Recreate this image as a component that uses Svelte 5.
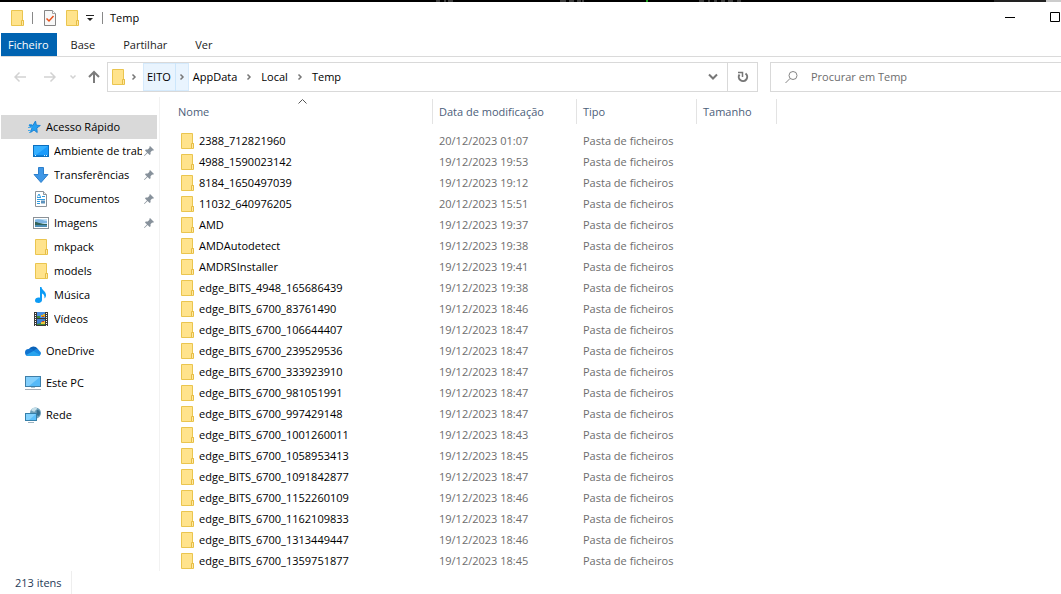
<script lang="ts">
	interface Entry {
		name: string;
		date: string;
	}

	interface Place {
		name: string;
		icon: string;
		pinned?: boolean;
	}

	const tabs = ['Base', 'Partilhar', 'Ver'];

	const crumbs = ['EITO', 'AppData', 'Local', 'Temp'];

	const places: Place[] = [
		{ name: 'Ambiente de trabalho', icon: 'desktop', pinned: true },
		{ name: 'Transferências', icon: 'download', pinned: true },
		{ name: 'Documentos', icon: 'document', pinned: true },
		{ name: 'Imagens', icon: 'image', pinned: true },
		{ name: 'mkpack', icon: 'folder' },
		{ name: 'models', icon: 'folder' },
		{ name: 'Música', icon: 'music' },
		{ name: 'Vídeos', icon: 'video' }
	];

	const roots: Place[] = [
		{ name: 'OneDrive', icon: 'cloud' },
		{ name: 'Este PC', icon: 'pc' },
		{ name: 'Rede', icon: 'network' }
	];

	const entries: Entry[] = [
		{ name: '2388_712821960', date: '20/12/2023 01:07' },
		{ name: '4988_1590023142', date: '19/12/2023 19:53' },
		{ name: '8184_1650497039', date: '19/12/2023 19:12' },
		{ name: '11032_640976205', date: '20/12/2023 15:51' },
		{ name: 'AMD', date: '19/12/2023 19:37' },
		{ name: 'AMDAutodetect', date: '19/12/2023 19:38' },
		{ name: 'AMDRSInstaller', date: '19/12/2023 19:41' },
		{ name: 'edge_BITS_4948_165686439', date: '19/12/2023 19:38' },
		{ name: 'edge_BITS_6700_83761490', date: '19/12/2023 18:46' },
		{ name: 'edge_BITS_6700_106644407', date: '19/12/2023 18:47' },
		{ name: 'edge_BITS_6700_239529536', date: '19/12/2023 18:47' },
		{ name: 'edge_BITS_6700_333923910', date: '19/12/2023 18:47' },
		{ name: 'edge_BITS_6700_981051991', date: '19/12/2023 18:47' },
		{ name: 'edge_BITS_6700_997429148', date: '19/12/2023 18:47' },
		{ name: 'edge_BITS_6700_1001260011', date: '19/12/2023 18:43' },
		{ name: 'edge_BITS_6700_1058953413', date: '19/12/2023 18:45' },
		{ name: 'edge_BITS_6700_1091842877', date: '19/12/2023 18:47' },
		{ name: 'edge_BITS_6700_1152260109', date: '19/12/2023 18:46' },
		{ name: 'edge_BITS_6700_1162109833', date: '19/12/2023 18:47' },
		{ name: 'edge_BITS_6700_1313449447', date: '19/12/2023 18:46' },
		{ name: 'edge_BITS_6700_1359751877', date: '19/12/2023 18:45' }
	];

	const total = 213;
	let query = $state('');
</script>

{#snippet icon(kind: string)}
	<svg class="icon" width="16" height="16" viewBox="0 0 16 16" aria-hidden="true">
		{#if kind === 'folder'}
			<path d="M2.5 .5h11v10h1v5h-12z" fill="#ffe38c" stroke="#eac54f" />
			<path d="M12.5 15V10.5h2V15" fill="#ffe9a2" stroke="#e6bd45" />
		{:else if kind === 'star'}
			<path
				d="M10.500 2l.8 4.200 4 .3-3.500 2.500.4 4.500-3.200-2.500-3.500 2.500 1.300-4.300-2.600-2.700 3.800-.2z"
				fill="#259ff0"
				stroke="#1b84d6"
			/>
			<path d="M4 5.500h3M3 8.500h4M3 11.500h3M4 13.500h2" stroke="#4aa9e8" />
		{:else if kind === 'desktop'}
			<rect x=".5" y="2.500" width="15" height="11" fill="#1b9bfb" stroke="#0b6fbf" />
			<path d="M1 3h14L3 12H1z" fill="#36b0ff" />
			<path d="M1 12.500h14" stroke="#0b7fd8" />
			<path d="M2 12.500h1M11 12.500h1M13 12.500h1" stroke="#d8f0ff" />
		{:else if kind === 'download'}
			<path d="M5.500 .5h5v7h4.500L8 15.500 1 7.500h4.500z" fill="#3f97e6" stroke="#2c7fcc" />
		{:else if kind === 'document'}
			<path d="M2.500 .5h8l3 3v12h-11z" fill="#fff" stroke="#8c9399" />
			<path d="M10.500 .5v3h3" fill="#e7eaec" stroke="#8c9399" />
			<path d="M4 6.500h4M4.500 5.500L6 3l1.500 3M9 5.500h3M4 8.500h8M4 10.500h3M4 12.500h3" fill="none" stroke="#2f9be0" />
			<path d="M8 9.500h4v3H8z" fill="#5d93bd" />
		{:else if kind === 'image'}
			<rect x=".5" y="2.500" width="15" height="11" fill="#fff" stroke="#8b9197" />
			<rect x="2" y="4" width="12" height="8" fill="#bfe0f5" />
			<path d="M2 5c4-2 8 1 12 1v2H2z" fill="#7eb4e2" />
			<path d="M2 7c3 0 5 2 12 2v1H2z" fill="#32635a" />
			<path d="M2 10h12v2H2z" fill="#4d8db4" />
		{:else if kind === 'music'}
			<path
				d="M7 0h1.500c0 3 4.500 4 4.500 8 0 1.500-.5 2.500-1.500 3.500.3-3-1-4.500-2.500-5V13c0 1.600-1.500 3-3.500 3S2 15.300 2 13.500 3.600 10.500 5.500 10.500c.6 0 1.100.1 1.500.3z"
				fill="#0c9bf5"
			/>
		{:else if kind === 'video'}
			<path d="M1 1h14v14H1z" fill="#3a3a3a" />
			<path d="M4 1h8v6H4z" fill="#4a8fe0" />
			<path d="M4 8h8v6H4z" fill="#3d7fd2" />
			<path d="M8 4h2v-1h2v3H8z" fill="#e0b12b" />
			<path d="M4 5h3v2H4zM8 12h4v2H4v-1z" fill="#3f8c3a" />
			<path d="M8 11h1v-1h3v3H8z" fill="#edc83a" />
			<path d="M9 5h2v1H9zM9 10h2v1H9z" fill="#c7402c" />
			<path d="M2.500 2v13M13.500 2v13" stroke="#fff" stroke-dasharray="1 1" />
		{:else if kind === 'cloud'}
			<path d="M4 6a5 4.500 0 0 1 8.500-.5L14 9 6 11z" fill="#0a62b8" />
			<path d="M3.500 6c2-.6 3.500 0 5 1l3 4-8 2A3.500 3.500 0 0 1 3.500 6z" fill="#1173cf" />
			<path d="M8.500 8c2-2.700 5-2.700 6 0 2 .8 2 4.200-.5 5H7z" fill="#1a8ae2" />
			<path d="M1 12l7.500-4L15 12c-.5.700-1 1-2 1H3.500c-1 0-2-.3-2.500-1z" fill="#29a4ee" />
		{:else if kind === 'pc'}
			<rect x=".5" y="1.500" width="15" height="10" fill="#55b9f8" stroke="#3f7fa8" />
			<path d="M1 2h14L4 11H1z" fill="#83cffc" />
			<path d="M6 12h4v1H6z" fill="#a9c3d3" />
			<path d="M0 14.500h16" stroke="#a4adb7" />
		{:else if kind === 'network'}
			<circle cx="10.500" cy="6" r="5.500" fill="#6d9fb9" />
			<path d="M6 3c2-3 5-2.500 6-2 0 2-2 2-2 3s-2 1-4-1z" fill="#c6e0ea" />
			<path d="M12 3c2 0 3 1 3 3s-1 3-2 3-2-4-1-6z" fill="#38708f" />
			<rect x=".5" y="6.500" width="11" height="7" fill="#5cc0fb" stroke="#357fa9" />
			<path d="M1 7h10l-7 6H1z" fill="#83d2fe" />
			<path d="M3 15.500h6" stroke="#9db4c2" />
		{/if}
	</svg>
{/snippet}

{#snippet chevron()}
	<svg width="6" height="8" viewBox="0 0 6 8" aria-hidden="true">
		<path d="M1.500 1.500L4 4 1.500 6.500" fill="none" stroke="#777" stroke-width="1.500" />
	</svg>
{/snippet}

<div class="window">
	<div class="backdrop">
		<svg width="340" height="2" aria-hidden="true">
			<path d="M3 1h4M12 0v2M15 1h5M127 1h6M136 1h5M144 1h4M150 0v2M266 1h5M276 0v2M281 1h3M288 1h4M295 1h5M304 1h4" stroke="#777" />
			<path d="M214 0v2" stroke="#1fa01f" stroke-width="2" />
		</svg>
		<span class="backdrop-tab"></span>
		<span class="backdrop-end"></span>
	</div>

	<header class="titlebar">
		{@render icon('folder')}
		<span class="bar first"></span>
		<button class="quick" aria-label="Propriedades">
			<svg width="14" height="16" viewBox="0 0 14 16">
				<path d="M1.500 .5h8l3 3v12h-11z" fill="#f8f8f8" stroke="#858585" />
				<path d="M9.500 .5v3h3" fill="#fff" stroke="#a0a0a0" />
				<path d="M3.500 8.500l2.500 2.500 4.500-5" fill="none" stroke="#e8521c" stroke-width="1.500" />
			</svg>
		</button>
		<button class="quick new-folder" aria-label="Nova pasta">{@render icon('folder')}</button>
		<button class="quick" aria-label="Personalizar barra">
			<svg width="8" height="8" viewBox="0 0 8 8">
				<path d="M0 1.500h8" stroke="#222" />
				<path d="M1 4h6L4 7z" fill="#222" />
			</svg>
		</button>
		<span class="bar last"></span>
		<span class="title">Temp</span>
		<button class="caption minimize" aria-label="Minimizar">
			<svg width="11" height="11"><path d="M0 5.500h10" stroke="#000" /></svg>
		</button>
		<button class="caption maximize" aria-label="Maximizar">
			<svg width="11" height="11"><path d="M.5 .5h9v9h-9z" fill="none" stroke="#000" /></svg>
		</button>
	</header>

	<nav class="ribbon">
		<button class="tab file">Ficheiro</button>
		{#each tabs as tab (tab)}
			<button class="tab">{tab}</button>
		{/each}
	</nav>

	<div class="navbar">
		<div class="history">
			<button class="back" aria-label="Retroceder" disabled>
				<svg width="12" height="12" viewBox="0 0 12 12">
					<path d="M12 6H1M5.500 1.500L1 6l4.500 4.500" fill="none" stroke="#d2d2d2" stroke-width="1.500" />
				</svg>
			</button>
			<button class="forward" aria-label="Avançar" disabled>
				<svg width="12" height="12" viewBox="0 0 12 12">
					<path d="M0 6h11M6.500 1.500L11 6l-4.500 4.500" fill="none" stroke="#d2d2d2" stroke-width="1.500" />
				</svg>
			</button>
			<button class="recent" aria-label="Localizações recentes">
				<svg width="6" height="6" viewBox="0 0 6 6">
					<path d="M.5 1.500L3 4l2.500-2.500" fill="none" stroke="#d2d2d2" stroke-width="1.500" />
				</svg>
			</button>
			<button class="up" aria-label="Subir">
				<svg width="12" height="14" viewBox="0 0 12 14">
					<path d="M6 13V2M1 7l5-5 5 5" fill="none" stroke="#7c7c7c" stroke-width="2" />
				</svg>
			</button>
		</div>

		<div class="address">
			<button class="crumb-root" aria-label="Pasta">{@render icon('folder')}</button>
			<button class="crumb-arrow" aria-label="Expandir">{@render chevron()}</button>
			{#each crumbs as crumb, i (crumb)}
				<span class="crumb" class:hot={i === 0}>
					<button class="crumb-name">{crumb}</button>
					{#if i < crumbs.length - 1}
						<button class="crumb-arrow" aria-label="Expandir {crumb}">{@render chevron()}</button>
					{/if}
				</span>
			{/each}
			<button class="history-drop" aria-label="Localizações anteriores">
				<svg width="10" height="8" viewBox="0 0 10 8">
					<path d="M1 1.500l4 4 4-4" fill="none" stroke="#777" stroke-width="2" />
				</svg>
			</button>
			<button class="refresh" aria-label="Atualizar">
				<svg width="12" height="12" viewBox="0 0 12 12">
					<path d="M8.500 2.500A4.200 4.200 0 1 1 2.500 3.500" fill="none" stroke="#777" stroke-width="2" />
					<path d="M1 1.500h4.500V6" fill="none" stroke="#777" stroke-width="1.500" />
				</svg>
			</button>
		</div>

		<label class="search">
			<svg width="13" height="13" viewBox="0 0 13 13" aria-hidden="true">
				<circle cx="8" cy="4.500" r="4" fill="none" stroke="#858585" />
				<path d="M5 7.500L.5 12" stroke="#858585" />
			</svg>
			<input type="text" placeholder="Procurar em Temp" aria-label="Procurar em Temp" bind:value={query} />
		</label>
	</div>

	<div class="body">
		<aside class="sidebar">
			<button class="place root selected">{@render icon('star')}<span>Acesso Rápido</span></button>
			{#each places as place (place.name)}
				<button class="place">
					{@render icon(place.icon)}
					<span class="label">{place.name}</span>
					{#if place.pinned}
						<svg class="pin" width="10" height="10" viewBox="0 0 10 10" aria-hidden="true">
							<path d="M6 0l4 4-1 .7-.8-.2L6.500 6.300l.1 2-1 .7-2-2L.5 10 0 9.500l3-3.100-2-2 .7-1 2 .1L5.500 1.800 5.300 1z" fill="#87919b" />
						</svg>
					{/if}
				</button>
			{/each}
			{#each roots as place (place.name)}
				<button class="place root spaced">{@render icon(place.icon)}<span>{place.name}</span></button>
			{/each}
		</aside>

		<main class="files">
			<table>
				<colgroup>
					<col class="col-name" />
					<col class="col-date" />
					<col class="col-type" />
					<col class="col-size" />
					<col />
				</colgroup>
				<thead>
					<tr>
						<th aria-sort="ascending">
							<div class="head">
								Nome
								<svg class="sort" width="9" height="5" viewBox="0 0 9 5" aria-hidden="true">
									<path d="M.5 4.500l4-4 4 4" fill="none" stroke="#555" />
								</svg>
							</div>
						</th>
						<th><div class="head">Data de modificação</div></th>
						<th><div class="head">Tipo</div></th>
						<th><div class="head">Tamanho</div></th>
						<th></th>
					</tr>
				</thead>
				<tbody>
					{#each entries as entry (entry.name)}
						<tr>
							<td><div class="name">{@render icon('folder')}{entry.name}</div></td>
							<td class="dim">{entry.date}</td>
							<td class="dim">Pasta de ficheiros</td>
							<td></td>
							<td></td>
						</tr>
					{/each}
				</tbody>
			</table>
		</main>
	</div>

	<footer class="status"><span>{total} itens</span></footer>
</div>

<style>
	:global(body) {
		margin: 0;
		background: #fff;
	}

	.window {
		padding-left: 1px;
		overflow: hidden;
		font-family: 'Open Sans', 'Noto Sans', sans-serif;
		font-size: 11px;
		line-height: 16px;
		color: #000;
		background: #fff;
	}

	button {
		display: flex;
		align-items: center;
		margin: 0;
		padding: 0;
		border: 0;
		background: none;
		font: inherit;
		color: inherit;
	}

	svg {
		display: block;
		flex: none;
	}

	.backdrop {
		display: flex;
		justify-content: flex-end;
		height: 2px;
		margin-left: -1px;
		background: #000;
	}

	.backdrop svg {
		margin-right: 221px;
	}

	.backdrop-tab {
		width: 52px;
		background: #222;
	}

	.backdrop-end {
		width: 15px;
		background: #ccc;
	}

	.titlebar {
		display: flex;
		align-items: center;
		height: 31px;
		padding-left: 8px;
	}

	.bar {
		width: 1px;
		height: 12px;
		background: #888;
	}

	.bar.first {
		margin: 0 10px 0 7px;
	}

	.bar.last {
		margin: 0 7px 0 8px;
	}

	.new-folder {
		margin: 0 6px 0 7px;
	}

	.title {
		flex: 1;
	}

	.caption {
		height: 31px;
	}

	.minimize {
		width: 45px;
		padding-left: 17px;
	}

	.maximize {
		width: 28px;
		padding-left: 17px;
	}

	.ribbon {
		display: flex;
		height: 23px;
		border-bottom: 1px solid #dadada;
	}

	.tab {
		padding: 0 14px;
		color: #222;
	}

	.tab.file {
		padding: 0 8px 0 7px;
		color: #fff;
		background: #0063b1;
	}

	.navbar {
		display: flex;
		padding: 5px 0;
	}

	.history {
		display: flex;
		flex: none;
		width: 106px;
	}

	.back {
		padding-left: 13px;
	}

	.forward {
		padding-left: 18px;
	}

	.recent {
		padding-left: 14px;
	}

	.up {
		padding-left: 12px;
	}

	.address {
		display: flex;
		flex: 649 1 0;
		box-sizing: border-box;
		height: 30px;
		border: 1px solid #d9d9d9;
	}

	.crumb-root {
		padding-left: 2px;
	}

	.crumb-arrow {
		justify-content: center;
		width: 16px;
	}

	.crumb {
		display: flex;
	}

	.crumb-name {
		padding: 0 4px;
	}

	.crumb.hot {
		margin-left: 1px;
		background: #e9f4fe;
		box-shadow: inset 0 0 0 1px #d5eafc;
	}

	.crumb.hot .crumb-arrow {
		width: 14px;
		border-left: 1px solid #cce6fb;
	}

	.history-drop {
		margin-left: auto;
		padding: 0 9px;
	}

	.refresh {
		justify-content: center;
		width: 30px;
		border-left: 1px solid #d9d9d9;
	}

	.search {
		display: flex;
		flex: 276 1 0;
		align-items: center;
		box-sizing: border-box;
		height: 30px;
		margin-left: 12px;
		padding-left: 14px;
		border: 1px solid #d9d9d9;
		border-right: 0;
	}

	.search input {
		flex: 1;
		min-width: 0;
		margin-left: 13px;
		padding: 0;
		border: 0;
		outline: 0;
		background: none;
		font: inherit;
	}

	.search input::placeholder {
		color: #6d6d6d;
		opacity: 1;
	}

	.body {
		display: flex;
	}

	.sidebar {
		flex: none;
		box-sizing: border-box;
		width: 159px;
		padding: 18px 2px 0 0;
		border-right: 1px solid #f2f2f2;
	}

	.place {
		box-sizing: border-box;
		width: 100%;
		height: 24px;
		padding: 0 3px 0 32px;
		gap: 5px;
		white-space: nowrap;
	}

	.place.root {
		padding-left: 24px;
	}

	.place.selected {
		background: #d9d9d9;
	}

	.place.spaced {
		margin-top: 8px;
	}

	.label {
		flex: 1;
		overflow: hidden;
		text-align: left;
	}

	.pin {
		margin-left: -3px;
	}

	.files {
		flex: 1;
		min-width: 0;
		padding: 2px 0 0 12px;
	}

	table {
		width: 100%;
		table-layout: fixed;
		border-collapse: collapse;
	}

	.col-name {
		width: 261px;
	}

	.col-date {
		width: 144px;
	}

	.col-type {
		width: 120px;
	}

	.col-size {
		width: 80px;
	}

	th {
		padding: 0 0 6px;
		font-weight: 400;
		text-align: left;
		color: #4c607a;
	}

	.head {
		position: relative;
		height: 25px;
		padding-left: 6px;
		border-right: 1px solid #e3e3e3;
		line-height: 25px;
	}

	.sort {
		position: absolute;
		top: 0;
		left: 50%;
		margin-left: -4px;
	}

	td {
		height: 21px;
		padding: 0 0 0 6px;
		white-space: nowrap;
	}

	.name {
		display: flex;
		align-items: center;
		gap: 4px;
		padding-left: 1px;
	}

	.dim {
		color: #6d6d6d;
	}

	.status {
		display: flex;
		height: 23px;
		color: #263a56;
	}

	.status span {
		padding: 0 9px 0 14px;
		border-right: 1px solid #eee;
		line-height: 23px;
	}
</style>
